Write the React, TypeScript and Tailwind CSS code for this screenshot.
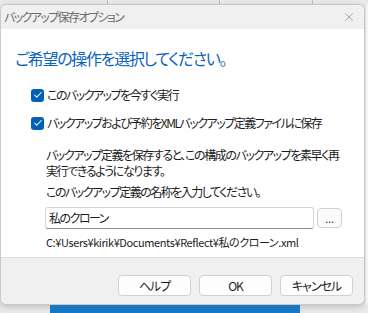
import { X, Check } from 'lucide-react';

const jp = "font-['Noto_Sans_CJK_JP','Noto_Sans',sans-serif] [font-feature-settings:'palt']";

function CheckRow({ label }: { label: string }) {
  return (
    <div className="flex items-center h-[16px] pl-[30px]">
      <span className="w-[13px] h-[13px] rounded-[3px] bg-[#005fb8] flex items-center justify-center shrink-0">
        <Check size={10} strokeWidth={2.5} color="white" />
      </span>
      <span className="ml-[3px] text-[12px] leading-[16px] tracking-[-1.5px] whitespace-nowrap text-[#1b1b1b]">{label}</span>
    </div>
  );
}

function DialogButton({ label }: { label: string }) {
  return (
    <button className="w-[73px] h-[21px] rounded-[4px] border border-[#d1d1d1] bg-[#fdfdfd] text-[12px] leading-[19px] tracking-[-1px] text-[#1b1b1b]">
      {label}
    </button>
  );
}

export default function App() {
  return (
    <div className={`w-[368px] h-[313px] overflow-hidden bg-[#e9e9e9] flex flex-col ${jp}`}>
      {/* window behind the dialog */}
      <div className="h-[4px] flex shrink-0">
        <div className="w-[108px] border-r border-[#bcbcbc]" />
        <div className="w-[112px] border-r border-[#bcbcbc]" />
        <div className="w-[93px] border-r border-[#bcbcbc]" />
        <div className="flex-1" />
      </div>

      <div className="flex h-[301px] shrink-0">
        {/* dialog */}
        <div className="w-[365px] h-full rounded-[7px] border border-[#c9c9c9] bg-white overflow-hidden flex flex-col shadow-[0_2px_6px_rgba(0,0,0,0.18)]">
          <div className="h-[24px] bg-[#f0f0f0] flex items-center justify-between pl-[3px] pr-[8px] shrink-0">
            <span className="text-[12px] text-[#6b6b6b] leading-[16px] tracking-[-1.6px]">バックアップ保存オプション</span>
            <X size={14} strokeWidth={1} color="#7a7a7a" />
          </div>

          <div className="flex flex-col h-[228px] shrink-0">
            <div className="mt-[19px] h-[20px] pl-[14px] text-[16px] leading-[20px] tracking-[-1.3px] whitespace-nowrap text-[#0a64bd]">
              ご希望の操作を選択してください。
            </div>
            <div className="mt-[19px]">
              <CheckRow label="このバックアップを今すぐ実行" />
            </div>
            <div className="mt-[12px]">
              <CheckRow label="バックアップおよび予約をXMLバックアップ定義ファイルに保存" />
            </div>
            <div className="mt-[16px] pl-[45px] text-[12px] leading-[16px] tracking-[-1.4px] whitespace-nowrap text-[#1b1b1b]">
              <div className="h-[16px]">バックアップ定義を保存すると、この構成のバックアップを素早く再</div>
              <div className="h-[16px]">実行できるようになります。</div>
            </div>
            <div className="mt-[5px] pl-[45px] h-[16px] text-[12px] leading-[16px] tracking-[-1.5px] whitespace-nowrap text-[#1b1b1b]">
              このバックアップ定義の名称を入力してください。
            </div>
            <div className="mt-[7px] pl-[44px] flex items-center gap-[3px]">
              <div className="w-[269px] h-[22px] rounded-[3px] border border-[#d6d6d6] border-b-[#8a8a8a] bg-white pl-[3px] text-[12px] leading-[20px] tracking-[-1.5px] text-[#1b1b1b]">
                私のクローン
              </div>
              <button className="w-[25px] h-[20px] rounded-[4px] border border-[#d1d1d1] bg-[#fbfbfb] text-[11px] leading-[14px] text-[#333]">
                ...
              </button>
            </div>
            <div className="mt-[6px] pl-[45px] h-[14px] text-[11px] leading-[14px] tracking-[-0.4px] whitespace-nowrap text-[#1b1b1b]">
              C:¥Users¥kirik¥Documents¥Reflect¥私のクローン.xml
            </div>
          </div>

          <div className="flex-1 border-t border-[#dcdcdc] bg-[#f0f0f0] flex justify-end gap-[8px] pt-[17px] pr-[11px]">
            <DialogButton label="ヘルプ" />
            <DialogButton label="OK" />
            <DialogButton label="キャンセル" />
          </div>
        </div>
        <div className="flex-1 bg-[#f4f4f4] border-l border-[#dedede]" />
      </div>

      <div className="flex-1 flex">
        <div className="w-[50px]" />
        <div className="w-[250px] bg-[#1976c0]" />
        <div className="flex-1" />
      </div>
    </div>
  );
}
